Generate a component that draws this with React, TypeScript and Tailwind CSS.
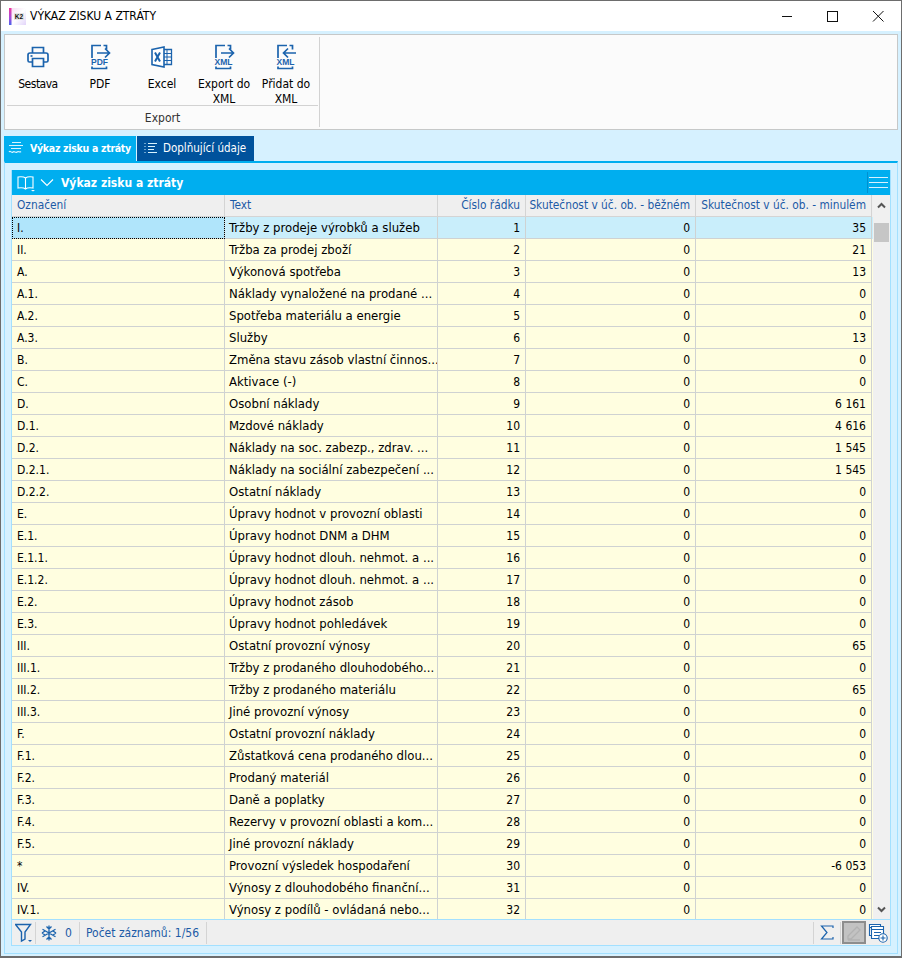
import React from "react";

const rows: [string, string, string, string][] = [
  ["I.", "Tržby z prodeje výrobků a služeb", "1", "35"],
  ["II.", "Tržba za prodej zboží", "2", "21"],
  ["A.", "Výkonová spotřeba", "3", "13"],
  ["A.1.", "Náklady vynaložené na prodané ...", "4", "0"],
  ["A.2.", "Spotřeba materiálu a energie", "5", "0"],
  ["A.3.", "Služby", "6", "13"],
  ["B.", "Změna stavu zásob vlastní činnos...", "7", "0"],
  ["C.", "Aktivace (-)", "8", "0"],
  ["D.", "Osobní náklady", "9", "6 161"],
  ["D.1.", "Mzdové náklady", "10", "4 616"],
  ["D.2.", "Náklady na soc. zabezp., zdrav. ...", "11", "1 545"],
  ["D.2.1.", "Náklady na sociální zabezpečení ...", "12", "1 545"],
  ["D.2.2.", "Ostatní náklady", "13", "0"],
  ["E.", "Úpravy hodnot v provozní oblasti", "14", "0"],
  ["E.1.", "Úpravy hodnot DNM a DHM", "15", "0"],
  ["E.1.1.", "Úpravy hodnot dlouh. nehmot. a ...", "16", "0"],
  ["E.1.2.", "Úpravy hodnot dlouh. nehmot. a ...", "17", "0"],
  ["E.2.", "Úpravy hodnot zásob", "18", "0"],
  ["E.3.", "Úpravy hodnot pohledávek", "19", "0"],
  ["III.", "Ostatní provozní výnosy", "20", "65"],
  ["III.1.", "Tržby z prodaného dlouhodobého...", "21", "0"],
  ["III.2.", "Tržby z prodaného materiálu", "22", "65"],
  ["III.3.", "Jiné provozní výnosy", "23", "0"],
  ["F.", "Ostatní provozní náklady", "24", "0"],
  ["F.1.", "Zůstatková cena prodaného dlou...", "25", "0"],
  ["F.2.", "Prodaný materiál", "26", "0"],
  ["F.3.", "Daně a poplatky", "27", "0"],
  ["F.4.", "Rezervy v provozní oblasti a kom...", "28", "0"],
  ["F.5.", "Jiné provozní náklady", "29", "0"],
  ["*", "Provozní výsledek hospodaření", "30", "-6 053"],
  ["IV.", "Výnosy z dlouhodobého finanční...", "31", "0"],
  ["IV.1.", "Výnosy z podílů - ovládaná nebo...", "32", "0"],
];

const IC = "#1b63ad";

function DocArrow({ label, dir }: { label: string; dir: "r" | "l" }) {
  return (
    <svg width="22" height="26" viewBox="0 0 22 26" fill="none" stroke={IC} strokeWidth="1.700">
      <path d="M12 1.500H3v12.500M3 22.500v2h14.500v-2M17.500 5.500v-4H14.500" />
      {dir === "r" ? (
        <path d="M8 9h12.500M16 4.500l4.500 4.500-4.500 4.500" />
      ) : (
        <path d="M21 9H8.500M13 4.500 8.500 9l4.500 4.500" />
      )}
      <text x="10.500" y="21" textAnchor="middle" fontSize="8.500" fontWeight="700" fill={IC} stroke="none" fontFamily="'Liberation Sans',sans-serif">
        {label}
      </text>
    </svg>
  );
}

function Printer() {
  return (
    <svg width="22" height="22" viewBox="0 0 22 22" fill="none" stroke={IC} strokeWidth="1.700">
      <path d="M5.500 7V1.500h11V7" />
      <path d="M5 16H2.500A1.500 1.500 0 0 1 1 14.500V9a2 2 0 0 1 2-2h16a2 2 0 0 1 2 2v5.500A1.500 1.500 0 0 1 19.500 16H17" />
      <path d="M5.500 12.500h11v8h-11z" />
      <path d="M3.500 10h2" />
    </svg>
  );
}

function ExcelIcon() {
  return (
    <svg width="22" height="22" viewBox="0 0 22 22" fill="none" stroke={IC} strokeWidth="1.300">
      <path d="M12 3.500h8.500v15H12" />
      <path d="M12 7.500h8.500M12 11h8.500M12 14.500h8.500M16 3.500v15" strokeWidth="1" />
      <path d="M1 3.500 13 1v20L1 18.500z" fill="#fff" strokeWidth="1.600" />
      <path d="M4 6.500l5 9M9 6.500l-5 9" strokeWidth="2" />
    </svg>
  );
}

function ToolButton({ icon, label }: { icon: React.ReactNode; label: React.ReactNode }) {
  return (
    <div className="flex h-[69px] w-[62px] shrink-0 flex-col items-center pt-[7px]">
      <div className="flex h-[26px] items-center justify-center">{icon}</div>
      <div className="mt-[7px] text-center text-[12px] leading-[15px] text-black">{label}</div>
    </div>
  );
}

function Logo() {
  return (
    <svg width="17" height="17" viewBox="0 0 17 17">
      <defs>
        <linearGradient id="lg" x1="0" y1="0" x2="0" y2="1">
          <stop offset="0" stopColor="#f0389a" />
          <stop offset="0.6" stopColor="#a24ce0" />
          <stop offset="1" stopColor="#4a63e8" />
        </linearGradient>
        <linearGradient id="lg2" x1="0" y1="0" x2="1" y2="1">
          <stop offset="0" stopColor="#f6dcf4" />
          <stop offset="0.5" stopColor="#ffffff" />
          <stop offset="1" stopColor="#e2d4fa" />
        </linearGradient>
      </defs>
      <rect x="2" y="0" width="15" height="17" fill="url(#lg2)" />
      <rect x="0" y="0" width="2.500" height="17" fill="url(#lg)" />
      <rect x="5" y="5" width="10" height="7" fill="#e4e4e4" />
      <text x="10" y="11" textAnchor="middle" fontSize="6.500" fontWeight="700" fill="#111" fontFamily="'Liberation Sans',sans-serif">K2</text>
    </svg>
  );
}

function Cell({ w, right, className, children }: { w: string; right?: boolean; className?: string; children: React.ReactNode }) {
  return (
    <div className={`${w} flex h-full shrink-0 items-center overflow-hidden whitespace-nowrap border-r border-b border-[#cfd2d2] ${right ? "justify-end pr-[5px]" : "pl-[4px]"} ${className ?? ""}`}>
      {children}
    </div>
  );
}

function FirstCell({ selected, children }: { selected: boolean; children: React.ReactNode }) {
  return (
    <div className={`flex h-full w-[213px] shrink-0 items-center overflow-hidden whitespace-nowrap border-r border-b border-[#cfd2d2] pl-[5px] ${selected ? "bg-[#b0e5fb] outline-1 -outline-offset-1 outline-dotted outline-black" : ""}`}>
      {children}
    </div>
  );
}

function Header({ w, right, children }: { w: string; right?: boolean; children: React.ReactNode }) {
  return (
    <div className={`${w} flex h-full shrink-0 items-center overflow-hidden whitespace-nowrap border-r border-b border-[#d4d4d4] text-[11.800px] text-[#1c5aa6] ${right ? "justify-end pr-[5px]" : "pl-[5px]"}`}>
      {children}
    </div>
  );
}

export default function App() {
  return (
    <div
      className="flex h-[958px] w-[902px] flex-col overflow-hidden border border-b-2 border-[#6d6d6d] bg-[#d6f1ff] text-[12px] text-black"
      style={{ fontFamily: "'DejaVu Sans Condensed','DejaVu Sans',sans-serif" }}
    >
      {/* Title bar */}
      <div className="flex h-[30px] shrink-0 items-center bg-white pl-[8px]">
        <Logo />
        <span className="ml-[4px] text-[12px]">VÝKAZ ZISKU A ZTRÁTY</span>
        <div className="ml-auto flex items-center">
          <svg width="46" height="30" viewBox="0 0 46 30" stroke="#111" fill="none"><path d="M17 15.500h10" /></svg>
          <svg width="44" height="30" viewBox="0 0 44 30" stroke="#111" fill="none"><rect x="16.500" y="10.500" width="10" height="10" /></svg>
          <svg width="46" height="30" viewBox="0 0 46 30" stroke="#111" fill="none"><path d="M18 10l10.500 10.500M28.500 10 18 20.500" /></svg>
        </div>
      </div>

      {/* Ribbon */}
      <div className="mx-[3px] mt-[3px] flex h-[96px] shrink-0 border border-[#c6c8c8] bg-[#fbfbfb] p-[2px]">
        <div className="flex w-[311px] flex-col">
          <div className="flex h-[69px] border-b border-[#d2d2d2]">
            <ToolButton icon={<Printer />} label={<span className="tracking-[-0.500px]">Sestava</span>} />
            <ToolButton icon={<DocArrow label="PDF" dir="r" />} label="PDF" />
            <ToolButton icon={<ExcelIcon />} label="Excel" />
            <ToolButton icon={<DocArrow label="XML" dir="r" />} label={<>Export do<br />XML</>} />
            <ToolButton icon={<DocArrow label="XML" dir="l" />} label={<>Přidat do<br />XML</>} />
          </div>
          <div className="pt-[3px] text-center text-[12px] text-[#333]">Export</div>
        </div>
        <div className="ml-[1px] w-px bg-[#d2d2d2]" />
      </div>

      {/* Tabs */}
      <div className="mx-[3px] mt-[6px] flex h-[25px] shrink-0 gap-px whitespace-nowrap">
        <div className="flex h-full w-[132px] items-center bg-[#00aeef] pl-[3px] text-[10.500px] font-bold tracking-[-0.300px] text-white">
          <svg width="18" height="18" viewBox="0 0 18 18" fill="none" stroke="#d8f3ff" strokeWidth="1.200">
            <path d="M5 2.500h9M2 5.500h14M4 8.500h10M2 12c1.500-2 2.500 1.500 4 0s2.500 1.500 4 0 2.500 1 4-.5" />
          </svg>
          <span className="ml-[5px] pt-[1px]">Výkaz zisku a ztráty</span>
        </div>
        <div className="flex h-full w-[117px] items-center bg-[#00529c] pl-[6px] text-[11.500px] text-white">
          <svg width="16" height="16" viewBox="0 0 16 16" fill="none" stroke="#d8f3ff" strokeWidth="1.100">
            <path d="M5 2.500h9M5 5.500h7M5 8.500h6M5 11.500h9" />
            <path d="M1.500 2.500h1.500M1.500 5.500h1.500M1.500 8.500h1.500M1.500 11.500h1.500" strokeDasharray="1 1" />
          </svg>
          <span className="ml-[4px] pt-[1px]">Doplňující údaje</span>
        </div>
      </div>

      {/* Tab body */}
      <div className="mx-[3px] mb-[2px] flex min-h-0 flex-1 flex-col border-x border-b border-t-2 border-[#a3e0ff] border-t-[#00aeef] px-[6px] pt-[7px] pb-[7px]">
        <div className="flex min-h-0 flex-1 flex-col border border-t-0 border-[#a3e0ff]">
          {/* Panel header */}
          <div className="flex h-[25px] shrink-0 items-center bg-[#00aeef] pl-[5px] text-white">
            <svg width="19" height="18" viewBox="0 0 19 18" fill="none" stroke="#fff" strokeWidth="1.100">
              <path d="M8.500 4C7 2.800 4 2.500 1 3v11c3-.5 6-.3 7.500 1 1.500-1.300 4.500-1.500 7.500-1V3c-3-.5-6-.2-7.500 1zM8.500 4v11" />
              <path d="M14 16h4l-2 1.500z" fill="#fff" stroke="none" />
            </svg>
            <svg className="ml-[4px]" width="14" height="10" viewBox="0 0 14 10" fill="none" stroke="#fff" strokeWidth="1.100">
              <path d="M1 1.500l6 6 6-6" />
            </svg>
            <span className="ml-[7px] text-[12px] font-bold">Výkaz zisku a ztráty</span>
            <div className="ml-auto mr-[1px] flex h-[21px] items-center border-l border-[#0090d0] pl-[1px]">
              <svg width="20" height="14" viewBox="0 0 20 14" stroke="#d6f1ff" strokeWidth="1.200"><path d="M0 1.500h19M0 6.500h19M0 11.500h19" /></svg>
            </div>
          </div>

          {/* Grid and scrollbar */}
          <div className="flex min-h-0 flex-1">
            <div className="min-w-0 flex-1 overflow-hidden">
              <div className="flex h-[22px] bg-[#efefef]">
                <Header w="w-[213px]">Označení</Header>
                <Header w="w-[213px]">Text</Header>
                <Header w="w-[88px]" right>Číslo řádku</Header>
                <Header w="w-[170px]" right>Skutečnost v úč. ob. - běžném</Header>
                <Header w="w-[176px]" right>Skutečnost v úč. ob. - minulém</Header>
              </div>
              {rows.map((r, i) => (
                <div key={i} className={`flex h-[22px] ${i === 0 ? "bg-[#c9eefb]" : "bg-[#fffee0]"}`}>
                  <FirstCell selected={i === 0}>{r[0]}</FirstCell>
                  <Cell w="w-[213px]" className="text-[13px]">{r[1]}</Cell>
                  <Cell w="w-[88px]" right>{r[2]}</Cell>
                  <Cell w="w-[170px]" right>0</Cell>
                  <Cell w="w-[176px]" right>{r[3]}</Cell>
                </div>
              ))}
            </div>
            <div className="flex w-[17px] shrink-0 flex-col items-center bg-[#f0f0f0]">
              <div className="flex h-[20px] items-center">
                <svg width="9" height="7" viewBox="0 0 9 7" fill="none" stroke="#555" strokeWidth="2"><path d="M1 5.500l3.500-3.500 3.500 3.500" /></svg>
              </div>
              <div className="mt-[8px] h-[19px] w-[15px] bg-[#c6c6c6]" />
              <div className="mt-auto flex h-[20px] items-center">
                <svg width="9" height="7" viewBox="0 0 9 7" fill="none" stroke="#555" strokeWidth="2"><path d="M1 1.500l3.500 3.500 3.500-3.500" /></svg>
              </div>
            </div>
          </div>

          {/* Status bar */}
          <div className="flex h-[26px] shrink-0 items-center border-t border-[#a3e0ff] bg-[#efefef] text-[#1c5aa6]">
            <div className="flex h-[22px] w-[24px] shrink-0 items-center justify-end border-r border-[#d4d4d4] pr-[2px]">
              <svg width="18" height="20" viewBox="0 0 18 20" fill="none" stroke={IC} strokeWidth="1.400">
                <path d="M.5 1.500h15L10 9v7l-3.500 2V9z" />
                <path d="M13 17h4l-2 2z" fill={IC} stroke="none" />
              </svg>
            </div>
            <svg className="ml-[5px]" width="16" height="16" viewBox="0 0 16 16" fill="none" stroke={IC} strokeWidth="1.300">
              <path d="M8 .500v15M1.500 4.200l13 7.600M14.500 4.200l-13 7.600M5.500 1.500 8 4l2.500-2.500M5.500 14.500 8 12l2.500 2.500M1 8l3-2M1 8l3 2M15 8l-3-2M15 8l-3 2" />
            </svg>
            <span className="ml-[8px] w-[14px]">0</span>
            <div className="h-[22px] w-px bg-[#d4d4d4]" />
            <span className="ml-[6px]">Počet záznamů: 1/56</span>
            <div className="ml-[7px] h-[22px] w-px bg-[#d4d4d4]" />
            <div className="ml-auto flex items-center">
              <div className="h-[22px] w-px bg-[#d4d4d4]" />
              <svg className="mx-[6px]" width="14" height="15" viewBox="0 0 14 15" fill="none" stroke={IC} strokeWidth="1.200">
                <path d="M13 3V1H1.500L7 7.500 1.500 14H13v-2" />
              </svg>
              <div className="h-[22px] w-px bg-[#d4d4d4]" />
              <div className="mx-[1px] flex h-[23px] w-[24px] items-center justify-center border-2 border-[#8d8d8d] bg-[#c2c2c2]">
                <svg width="16" height="16" viewBox="0 0 16 16" fill="none" stroke="#b2b2b2" strokeWidth="1.300">
                  <path d="M2 11 11 2l3 3-9 9H2zM2 15h12" />
                </svg>
              </div>
              <svg className="mr-[2px] ml-[1px]" width="20" height="20" viewBox="0 0 20 20" fill="#fff" stroke={IC} strokeWidth="1.100">
                <path d="M1.500 1.500h11v3h-11zM1.500 4.500v8h2" />
                <path d="M3.500 3.500h12v12h-12z" />
                <path d="M3.500 6.500h12M6 9.500h7M6 12.500h5" fill="none" />
                <circle cx="15" cy="15" r="4.200" />
                <path d="M15 12.500v5M12.500 15h5" fill="none" />
              </svg>
            </div>
          </div>
        </div>
      </div>
    </div>
  );
}
